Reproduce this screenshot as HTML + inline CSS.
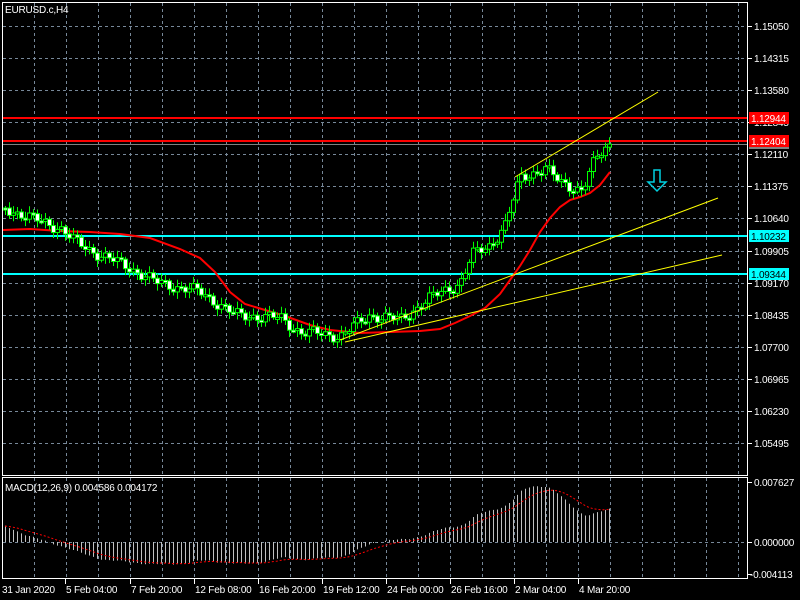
<!DOCTYPE html>
<html><head><meta charset="utf-8"><style>
html,body{margin:0;padding:0;background:#000;width:800px;height:600px;overflow:hidden}
svg{display:block}
text{font-family:"Liberation Sans",sans-serif;font-size:10px;letter-spacing:-0.2px;fill:#fff}
</style></head><body>
<svg id="s" width="800" height="600" xmlns="http://www.w3.org/2000/svg">
<rect x="0" y="0" width="800" height="600" fill="#000"/>
<g id="grid"></g>
<g id="lines"></g>
<g id="cand"></g>
<g id="macd"></g>
<g id="ann"></g>
<rect x="2.5" y="2.5" width="745" height="473" fill="none" stroke="#fff"/>
<rect x="2.5" y="477.5" width="745" height="101" fill="none" stroke="#fff"/>
<text x="5" y="13">EURUSD.c,H4</text>
<text x="5" y="491">MACD(12,26,9) 0.004586 0.004172</text>
<g id="axis"></g>
<g id="lab"></g>
</svg>
<script>
(function(){
var NS="http://www.w3.org/2000/svg";
function el(p,t,a,txt){var e=document.createElementNS(NS,t);for(var k in a)e.setAttribute(k,a[k]);if(txt)e.textContent=txt;document.getElementById(p).appendChild(e);return e;}
for(var x=34;x<747;x+=32){el("grid","line",{x1:x+.5,y1:3,x2:x+.5,y2:475,stroke:"#778899","stroke-dasharray":"3,3"});el("grid","line",{x1:x+.5,y1:478,x2:x+.5,y2:578,stroke:"#778899","stroke-dasharray":"3,3"});}
var prices=["1.15050","1.14315","1.13580","1.12845","1.12110","1.11375","1.10640","1.09905","1.09170","1.08435","1.07700","1.06965","1.06230","1.05495"];
for(var i=0;i<14;i++){var y=Math.round(26+i*32.08);el("grid","line",{x1:3,y1:y+.5,x2:747,y2:y+.5,stroke:"#778899","stroke-dasharray":"3,3"});el("axis","line",{x1:748,y1:y+.5,x2:752,y2:y+.5,stroke:"#fff"});el("axis","text",{x:754,y:y+4},prices[i]);}
el("grid","line",{x1:3,y1:542.5,x2:747,y2:542.5,stroke:"#778899","stroke-dasharray":"3,3"});
[["0.007627",482],["0.000000",542],["-0.004113",574]].forEach(function(a){el("axis","line",{x1:748,y1:a[1]+.5,x2:752,y2:a[1]+.5,stroke:"#fff"});el("axis","text",{x:a[0][0]=="-"?750:754,y:a[1]+4},a[0]);});
var tl=[["31 Jan 2020",2],["5 Feb 04:00",65],["7 Feb 20:00",130],["12 Feb 08:00",194],["16 Feb 20:00",258],["19 Feb 12:00",322],["24 Feb 00:00",386],["26 Feb 16:00",450],["2 Mar 04:00",514],["4 Mar 20:00",578]];
tl.forEach(function(t,i){if(i>0)el("axis","line",{x1:t[1]+.5,y1:579,x2:t[1]+.5,y2:584,stroke:"#fff"});el("axis","text",{x:t[1]+(i?1:0),y:593},t[0]);});
var kp=[[5,208],[30,218],[60,228],[75,242],[100,255],[130,268],[155,282],[200,292],[220,305],[235,315],[280,318],[300,332],[340,336],[370,315],[400,320],[430,298],[460,283],[472,255],[490,245],[505,225],[520,178],[545,168],[560,183],[582,190],[595,160],[608,145]];
function interp(k,x){for(var i=0;i<k.length-1;i++){if(x<=k[i+1][0]){var t=(x-k[i][0])/(k[i+1][0]-k[i][0]);return k[i][1]+t*(k[i+1][1]-k[i][1]);}}return k[k.length-1][1];}
var cl=[],prev=208;
for(var i=0;i<152;i++){var x=5+4*i;var c=interp(kp,x)+4*Math.sin(i*1.7)+3*Math.sin(i*0.63);cl.push(c);
var o=prev,hi=Math.min(o,c)-2-Math.abs(5*Math.sin(i*2.3)),lo=Math.max(o,c)+2+Math.abs(5*Math.cos(i*1.9));
el("cand","line",{x1:x+.5,y1:hi,x2:x+.5,y2:lo,stroke:"#00ff00"});
var bt=Math.min(o,c),bh=Math.max(2,Math.abs(o-c));
el("cand","rect",{x:x-1.5,y:bt,width:4,height:bh,fill:c<o?"#000":"#fff",stroke:"#00ff00"});
prev=c;}
function hl(y,col,w){el("lines","line",{x1:3,y1:y,x2:747,y2:y,stroke:col,"stroke-width":w});}
hl(144.5,"#808080",1);hl(118,"#ff0000",2);hl(141,"#ff0000",2);hl(236,"#00ffff",2);hl(274,"#00ffff",2);
var ma=[[3,230],[30,229],[60,231],[90,232],[120,234],[150,238],[180,249],[200,258],[215,272],[230,292],[245,304],[265,310],[285,316],[310,325],[330,330],[360,333],[390,332],[420,331],[440,329],[455,323],[470,316],[485,308],[500,294],[510,280],[520,266],[530,250],[540,232],[550,218],[560,207],[570,200],[580,197],[590,193],[600,185],[610,172]];
el("lines","polyline",{points:ma.map(function(p){return p.join(",")}).join(" "),fill:"none",stroke:"#ff0000","stroke-width":2});
[[515,177,658,92],[340,340,718,198],[345,342,722,255]].forEach(function(l){el("ann","line",{x1:l[0],y1:l[1],x2:l[2],y2:l[3],stroke:"#ffff00"});});
el("ann","path",{d:"M654 170 H660 V182 H666 L657 191 L648 182 H654 Z",fill:"none",stroke:"#00d0e0","stroke-width":1.5});
el("lab","rect",{x:749,y:146,width:40,height:3,fill:"#808080"});
[[118,"1.12944","#ff0000","#fff"],[141,"1.12404","#ff0000","#fff"],[236,"1.10232","#00ffff","#000"],[274,"1.09344","#00ffff","#000"]].forEach(function(a){el("lab","rect",{x:749,y:a[0]-6,width:40,height:12,fill:a[2]});el("lab","text",{x:751,y:a[0]+4,style:"fill:"+a[3]},a[1]);});
var p=cl.map(function(y){return 1.1505-(y-26)/4364.6;});
var e12=p[0]+0.0005,e26=p[0]-0.0018,sig=0.002,k12=2/13,k26=2/27;
var pts=[];
for(var i=0;i<p.length;i++){e12=e12+k12*(p[i]-e12);e26=e26+k26*(p[i]-e26);var m=e12-e26;
sig=sig+0.2*(m-sig);
var x=5+4*i;var y=542-m*7867;el("macd","line",{x1:x+.5,y1:542,x2:x+.5,y2:y,stroke:"#c0c0c0"});
pts.push(x+","+(542-sig*7867).toFixed(1));}
el("macd","polyline",{points:pts.join(" "),fill:"none",stroke:"#ff0000","stroke-dasharray":"2,2"});
})();
</script>
</body></html>
